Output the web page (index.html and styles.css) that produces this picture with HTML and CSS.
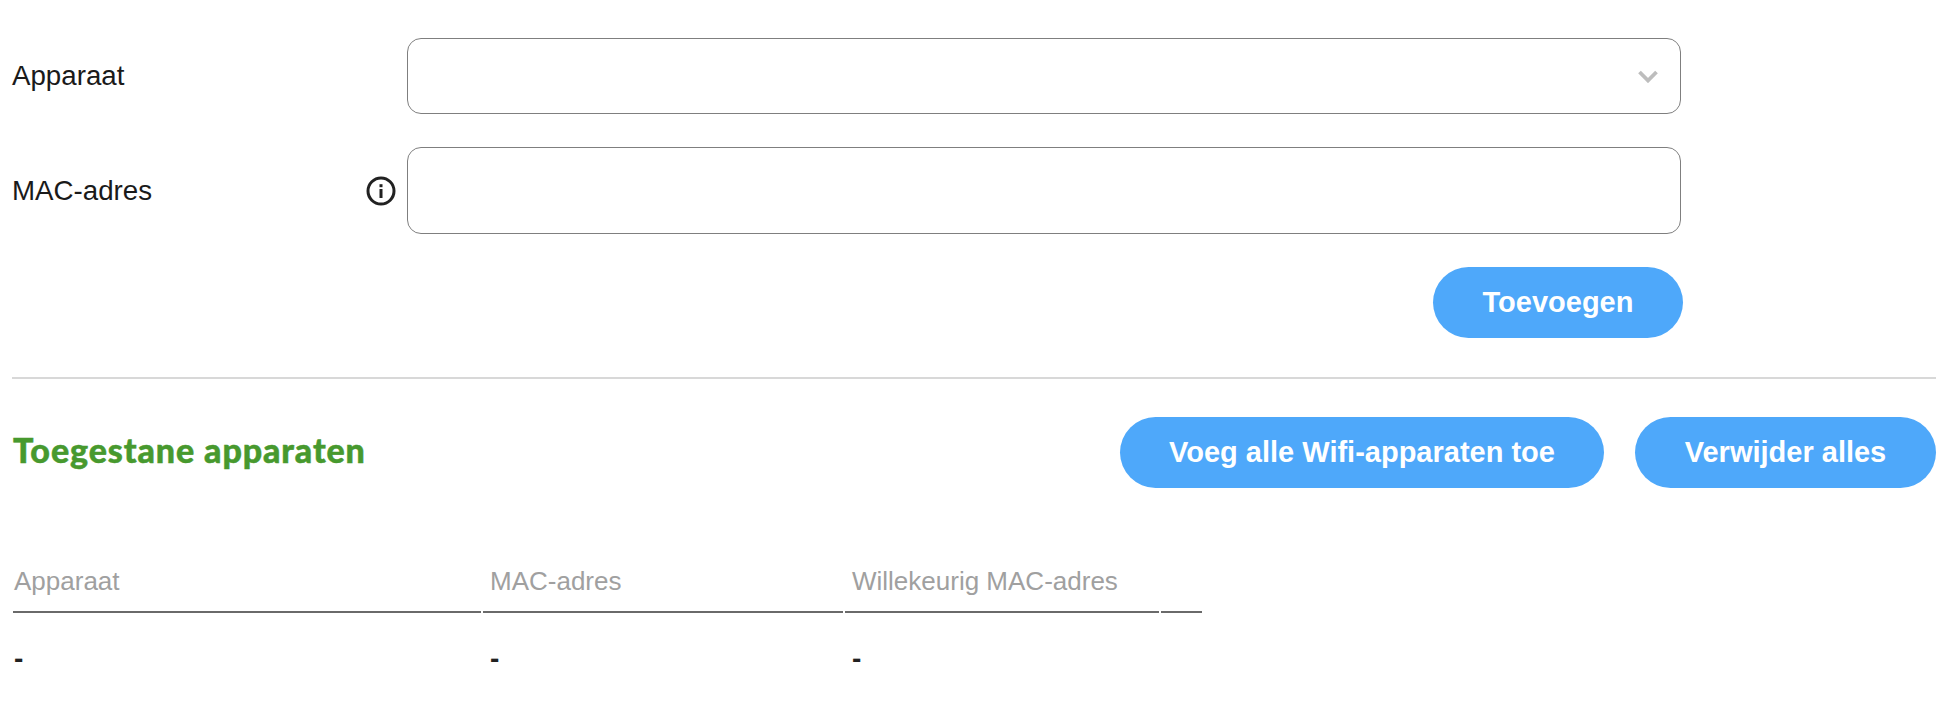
FILE: index.html
```html
<!DOCTYPE html>
<html lang="nl">
<head>
<meta charset="utf-8">
<title>Toegestane apparaten</title>
<link rel="stylesheet" href="styles.css">
</head>
<body>
<main class="page">
  <div class="form-row row-select">
    <label class="field-label">Apparaat</label>
    <div class="select-box">
      <svg class="chevron" width="20" height="13" viewBox="0 0 20 13"><path d="M1.5 2 L10 10.5 L18.5 2" fill="none" stroke="#bdbdbd" stroke-width="3.8"/></svg>
    </div>
  </div>
  <div class="form-row row-input">
    <label class="field-label">MAC-adres</label>
    <svg class="info" width="30" height="30" viewBox="0 0 30 30"><circle cx="15" cy="15" r="13" fill="none" stroke="#212121" stroke-width="3"/><rect x="13.5" y="13" width="3" height="9" fill="#212121"/><rect x="13.5" y="8.2" width="3" height="3" fill="#212121"/></svg>
    <input class="text-box" type="text">
  </div>
  <div class="add-row"><button class="btn btn-add">Toevoegen</button></div>
  <hr class="divider">
  <div class="list-head">
    <h2 class="list-title">Toegestane apparaten</h2>
    <div class="list-actions">
      <button class="btn btn-all">Voeg alle Wifi-apparaten toe</button>
      <button class="btn btn-remove">Verwijder alles</button>
    </div>
  </div>
  <table class="devices">
    <thead>
      <tr><th class="col-a">Apparaat</th><th class="col-b">MAC-adres</th><th class="col-c">Willekeurig MAC-adres</th><th class="col-d"></th></tr>
    </thead>
    <tbody>
      <tr><td>-</td><td>-</td><td>-</td><td></td></tr>
    </tbody>
  </table>
</main>
</body>
</html>
```
FILE: styles.css
```css
* { box-sizing: border-box; }
html, body { margin: 0; background: #fff; }
body { font-family: "Liberation Sans", Arial, sans-serif; color: #212121; }
.page { padding: 38px 4px 0 12px; height: 719px; overflow: hidden; }
.form-row { display: flex; align-items: center; width: 1669px; }
.row-select { height: 76px; margin-bottom: 33px; }
.row-input { height: 87px; margin-bottom: 33px; }
.field-label { font-size: 27.7px; line-height: 32px; flex: 1; color: #1a1a1a; }
.select-box { width: 1274px; height: 76px; border: 1px solid #7f7f7f; border-radius: 14px; display: flex; align-items: center; justify-content: flex-end; padding-right: 22px; }
.text-box { width: 1274px; height: 87px; border: 1px solid #7f7f7f; border-radius: 14px; outline: none; background: #fff; padding: 0 16px; margin-left: 11px; }
.info { display: block; }
.add-row { display: flex; justify-content: flex-end; width: 1671px; }
.btn { height: 71px; border: 0; border-radius: 36px; background: #4ea8fa; color: #fff; font-family: "Liberation Sans", Arial, sans-serif; font-weight: 700; font-size: 29px; padding: 0; }
.btn-add { width: 250px; }
.btn-all { width: 484px; }
.btn-remove { width: 301px; }
.divider { margin: 39px 0 0; height: 2px; border: 0; background: #d8d8d8; }
.list-head { display: flex; justify-content: space-between; align-items: center; margin-top: 38px; height: 71px; }
.list-title { margin: -6px 0 0 1px; font-family: Lato, sans-serif; font-weight: 900; font-size: 34px; letter-spacing: 0.9px; -webkit-text-stroke: 0.5px #47992e; color: #47992e; }
.list-actions { display: flex; gap: 31px; }
.devices { border-collapse: separate; border-spacing: 2px 0; margin: 60px 0 0 -1px; table-layout: fixed; width: 1189px; }
.devices th { font-weight: 400; font-size: 26px; color: #a0a0a0; text-align: left; height: 65px; padding: 3px 0 0 7px; border-bottom: 2px solid #6a6a6a; }
.devices td { font-size: 28px; height: 92px; padding: 0 0 0 7px; color: #212121; font-weight: 700; }
.devices th:first-child, .devices td:first-child { padding-left: 1px; }
.col-a { width: 468px; }
.col-b { width: 360px; }
.col-c { width: 314px; }
.col-d { width: 41px; }
```
